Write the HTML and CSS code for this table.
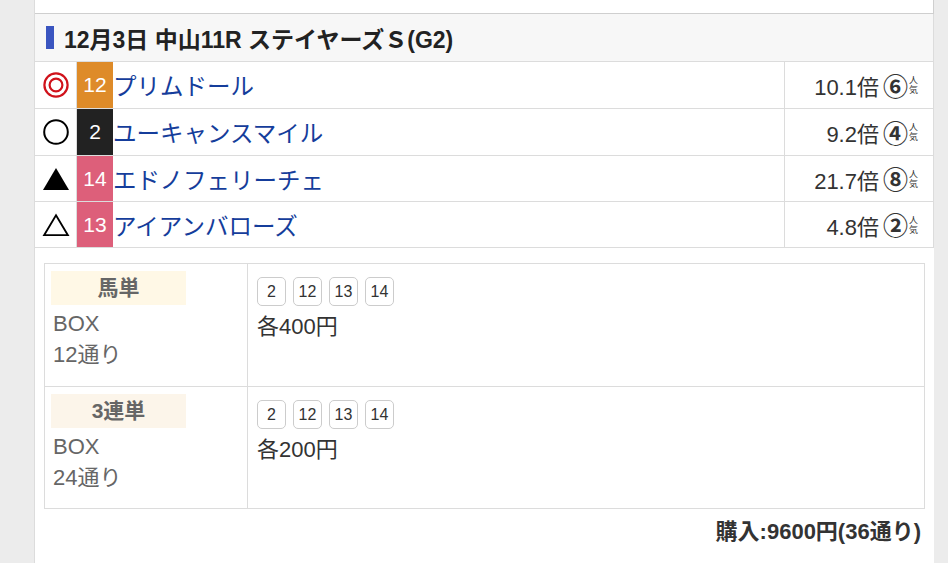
FILE: index.html
```html
<!DOCTYPE html>
<html lang="ja">
<head>
<meta charset="utf-8">
<link rel="stylesheet" href="styles.css">
</head>
<body>
<div class="page">
  <div class="prev"></div>
  <div class="race">
    <div class="race-head"><span class="bar"></span><span class="race-title">12月3日 中山11R ステイヤーズＳ(G2)</span></div>
    <div class="horse">
      <div class="mark red" title="◎"><svg width="28" height="28" viewBox="0 0 28 28"><circle cx="14" cy="14" r="11.6" fill="none" stroke="currentColor" stroke-width="2.2"/><circle cx="14" cy="14" r="6.4" fill="none" stroke="currentColor" stroke-width="2.2"/></svg></div>
      <div class="num c-orange">12</div>
      <div class="name">プリムドール</div>
      <div class="odds">10.1倍<span class="pop">⑥</span><span class="ninki">人<br>気</span></div>
    </div>
    <div class="horse">
      <div class="mark" title="○"><svg width="28" height="28" viewBox="0 0 28 28"><circle cx="14" cy="14" r="11.8" fill="none" stroke="currentColor" stroke-width="2"/></svg></div>
      <div class="num c-black">2</div>
      <div class="name">ユーキャンスマイル</div>
      <div class="odds">9.2倍<span class="pop">④</span><span class="ninki">人<br>気</span></div>
    </div>
    <div class="horse short">
      <div class="mark" title="▲"><svg width="28" height="28" viewBox="0 0 28 28"><polygon points="14,3 27,25 1,25" fill="currentColor"/></svg></div>
      <div class="num c-pink">14</div>
      <div class="name">エドノフェリーチェ</div>
      <div class="odds">21.7倍<span class="pop">⑧</span><span class="ninki">人<br>気</span></div>
    </div>
    <div class="horse short">
      <div class="mark" title="△"><svg width="28" height="28" viewBox="0 0 28 28"><polygon points="14,4.2 25.9,24.2 2.1,24.2" fill="none" stroke="currentColor" stroke-width="1.8" stroke-linejoin="miter"/></svg></div>
      <div class="num c-pink">13</div>
      <div class="name">アイアンバローズ</div>
      <div class="odds">4.8倍<span class="pop">②</span><span class="ninki">人<br>気</span></div>
    </div>
  </div>

  <div class="bets">
    <div class="bet">
      <div class="bet-type">
        <div class="bet-label cream">馬単</div>
        <div class="bet-line">BOX</div>
        <div class="bet-line">12通り</div>
      </div>
      <div class="bet-body">
        <div class="chips"><span class="chip">2</span><span class="chip">12</span><span class="chip">13</span><span class="chip">14</span></div>
        <div class="amount">各400円</div>
      </div>
    </div>
    <div class="bet">
      <div class="bet-type">
        <div class="bet-label peach">3連単</div>
        <div class="bet-line">BOX</div>
        <div class="bet-line">24通り</div>
      </div>
      <div class="bet-body">
        <div class="chips"><span class="chip">2</span><span class="chip">12</span><span class="chip">13</span><span class="chip">14</span></div>
        <div class="amount">各200円</div>
      </div>
    </div>
  </div>
  <div class="total">購入:9600円(36通り)</div>
</div>
</body>
</html>
```
FILE: styles.css
```css
* { box-sizing: border-box; }
html, body { margin: 0; padding: 0; }
body {
  background: #ececec;
  font-family: "Liberation Sans", "Noto Sans CJK JP", sans-serif;
  color: #333;
}
.page {
  margin-left: 34px;
  width: 900px;
  min-height: 563px;
  background: #fff;
  border-left: 1px solid #dcdcdc;
}
.prev {
  height: 14px;
  border-bottom: 1px solid #cfcfcf;
  border-right: 1px solid #cfcfcf;
}
.race {
  border-right: 1px solid #dcdcdc;
}
.race-head {
  height: 48px;
  background: #f7f7f7;
  border-bottom: 1px solid #dcdcdc;
  display: flex;
  align-items: center;
  padding-left: 11px;
  font-size: 23px;
  font-weight: bold;
  color: #222;
}
.bar {
  width: 8px;
  height: 23px;
  background: #3a55c0;
  margin-right: 10px;
}
.horse {
  display: flex;
  height: 47px;
  border-bottom: 1px solid #dcdcdc;
}
.horse.short { height: 46px; }
.mark {
  width: 42px;
  border-right: 1px solid #dcdcdc;
  display: flex;
  align-items: center;
  justify-content: center;
  color: #000;
}
.mark svg { display: block; }
.mark.red { color: #d0121b; }
.num {
  width: 36px;
  display: flex;
  align-items: center;
  justify-content: center;
  color: #fff;
  font-size: 21px;
}
.c-orange { background: #de8b29; }
.c-black { background: #222; }
.c-pink { background: #dd5f7a; }
.name {
  flex: 1;
  display: flex;
  align-items: center;
  padding-left: 0;
  font-size: 23.5px;
  color: #153d9b;
}
.odds {
  width: 149px;
  border-left: 1px solid #dcdcdc;
  display: flex;
  align-items: center;
  justify-content: flex-end;
  padding-right: 15px;
  font-size: 22px;
  color: #333;
}
.pop {
  font-family: "Noto Sans CJK JP", sans-serif;
  font-size: 25px;
  font-weight: bold;
  line-height: 25px;
  margin-left: 4px;
}
.ninki {
  font-family: "Noto Sans CJK JP", sans-serif;
  font-size: 9px;
  line-height: 10px;
  margin-left: 1px;
}
.bets {
  margin: 15px 9px 0 9px;
  border: 1px solid #dcdcdc;
}
.bet {
  display: flex;
  border-bottom: 1px solid #dcdcdc;
  height: 123px;
}
.bet:last-child { border-bottom: none; height: 121px; }
.bet-type {
  width: 203px;
  border-right: 1px solid #dcdcdc;
  padding: 7px 6px 0 6px;
  color: #666;
}
.bet-label {
  width: 135px;
  height: 34px;
  line-height: 34px;
  text-align: center;
  font-size: 21px;
  font-weight: bold;
  color: #666;
  margin-bottom: 3px;
}
.cream { background: #fff8e6; }
.peach { background: #fcf5ea; }
.bet-line {
  font-size: 22px;
  line-height: 31px;
  padding-left: 2px;
  color: #666;
}
.bet-body {
  flex: 1;
  padding: 13px 9px 0 9px;
}
.chips {
  display: flex;
  gap: 7px;
}
.chip {
  width: 29px;
  height: 29px;
  border: 1px solid #cccccc;
  border-radius: 5px;
  display: flex;
  align-items: center;
  justify-content: center;
  font-size: 16px;
  color: #333;
}
.amount {
  margin-top: 8px;
  font-size: 22px;
  line-height: 26px;
  color: #333;
}
.total {
  text-align: right;
  padding-right: 13px;
  margin-top: 10px;
  font-size: 22px;
  line-height: 26px;
  font-weight: bold;
  color: #333;
}
```
